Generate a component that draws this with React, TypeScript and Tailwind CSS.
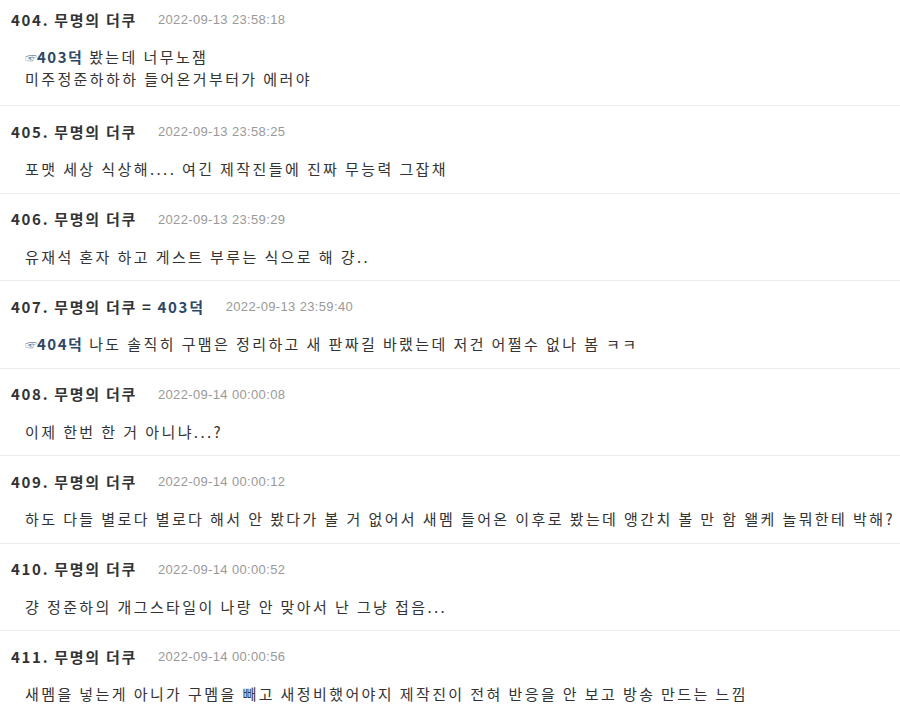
const posts = [
  { no: 404, date: "2022-09-13 23:58:18", lines: [[{ ref: "403덕" }, " 봤는데 너무노잼"], ["미주정준하하하 들어온거부터가 에러야"]] },
  { no: 405, date: "2022-09-13 23:58:25", lines: [["포맷 세상 식상해.... 여긴 제작진들에 진짜 무능력 그잡채"]] },
  { no: 406, date: "2022-09-13 23:59:29", lines: [["유재석 혼자 하고 게스트 부루는 식으로 해 걍.."]] },
  { no: 407, date: "2022-09-13 23:59:40", same: "403덕", lines: [[{ ref: "404덕" }, " 나도 솔직히 구맴은 정리하고 새 판짜길 바랬는데 저건 어쩔수 없나 봄 ㅋㅋ"]] },
  { no: 408, date: "2022-09-14 00:00:08", lines: [["이제 한번 한 거 아니냐...?"]] },
  { no: 409, date: "2022-09-14 00:00:12", lines: [["하도 다들 별로다 별로다 해서 안 봤다가 볼 거 없어서 새멤 들어온 이후로 봤는데 앵간치 볼 만 함 왤케 놀뭐한테 박해?"]] },
  { no: 410, date: "2022-09-14 00:00:52", lines: [["걍 정준하의 개그스타일이 나랑 안 맞아서 난 그냥 접음..."]] },
  { no: 411, date: "2022-09-14 00:00:56", lines: [["새멤을 넣는게 아니가 구멤을 빼고 새정비했어야지 제작진이 전혀 반응을 안 보고 방송 만드는 느낌"]] },
];

type Part = string | { ref: string };

function Line({ parts }: { parts: Part[] }) {
  return (
    <div className="h-[22px] leading-[22px] whitespace-nowrap">
      {parts.map((p, i) =>
        typeof p === "string" ? (
          <span key={i}>{p}</span>
        ) : (
          <span key={i} className="font-bold tracking-[1.5px] text-[#2d4867]">
            <span className="text-[12px] font-normal tracking-normal text-[#6a7f99]">☞</span>
            {p.ref}
          </span>
        )
      )}
    </div>
  );
}

export default function App() {
  return (
    <div className="w-[900px] h-[716px] overflow-hidden bg-white text-[#333] font-['Noto_Sans_CJK_KR','Noto_Sans',sans-serif]">
      {posts.map((post, idx) => (
        <div
          key={post.no}
          className={
            idx === 0
              ? "pt-[10px] pb-[15px] border-b border-[#ebebeb]"
              : "pt-[16px] pb-[12.5px] border-b border-[#ebebeb]"
          }
        >
          <div className="flex items-center h-[20px] pl-[11px]">
            <span className="text-[15px] font-bold tracking-[1.7px] text-[#333]">
              {post.no}. 무명의 더쿠
              {post.same && (
                <>
                  <span className="ml-[5px]">=</span>
                  <span className="ml-[5px] text-[#2d4867]">{post.same}</span>
                </>
              )}
            </span>
            <span className="ml-[21px] text-[13px] tracking-[0.35px] text-[#999] font-['Liberation_Sans',sans-serif]">{post.date}</span>
          </div>
          <div className="mt-[16px] pl-[25px] text-[15px] tracking-[2.4px] text-[#333]">
            {post.lines.map((l, i) => (
              <Line key={i} parts={l as Part[]} />
            ))}
          </div>
        </div>
      ))}
    </div>
  );
}
